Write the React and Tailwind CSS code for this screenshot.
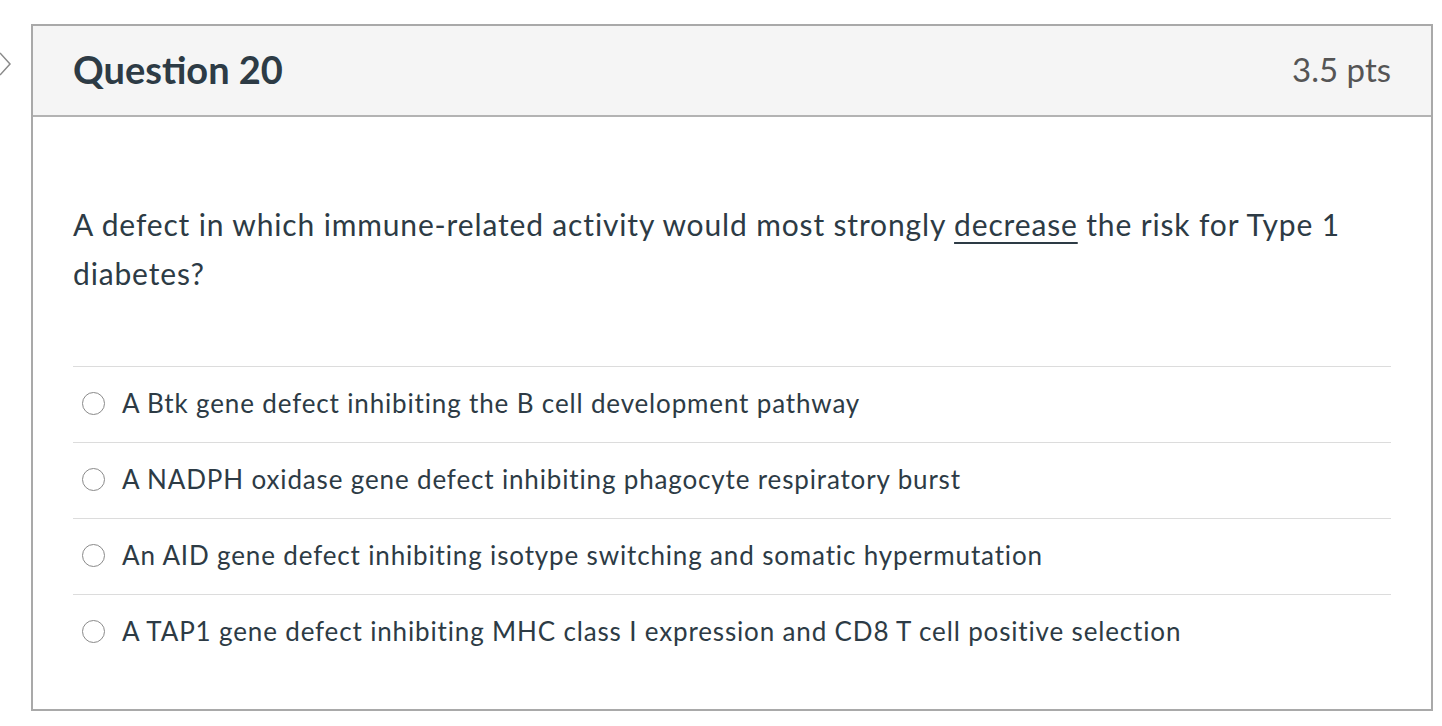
import React from "react";

const options = [
  "A Btk gene defect inhibiting the B cell development pathway",
  "A NADPH oxidase gene defect inhibiting phagocyte respiratory burst",
  "An AID gene defect inhibiting isotype switching and somatic hypermutation",
  "A TAP1 gene defect inhibiting MHC class I expression and CD8 T cell positive selection",
];

const App = () => {
  return (
    <div className="w-[1442px] h-[726px] bg-white overflow-hidden font-['Lato','Open_Sans',sans-serif] text-[#2d3b45]">
      <div className="flex pt-[24px]">
        {/* collapse arrow */}
        <div className="w-[31px] shrink-0 pt-[27px]">
          <svg width="14" height="26" viewBox="0 0 14 26" className="-ml-[2px]">
            <polyline points="2,2 12,13 2,24" fill="none" stroke="#8a8a8a" strokeWidth="1.5" />
          </svg>
        </div>

        <div className="w-[1402px] h-[687px] border-2 border-[#a9a9a9] flex flex-col">
          {/* header */}
          <div className="h-[91px] shrink-0 bg-[#f5f5f5] border-b-2 border-[#b3b3b3] flex items-center justify-between pl-[40px] pr-[40px]">
            <h2 className="text-[38px] font-bold text-[#2d3b45] leading-none pb-[4px]">
              Question 20
            </h2>
            <span className="text-[33px] text-[#555] leading-none pb-[2px]">3.5 pts</span>
          </div>

          {/* body */}
          <div className="px-[40px] pt-[83px]">
            <p className="text-[30px] tracking-[0.85px] leading-[49px] text-[#2d3b45]">
              A defect in which immune-related activity would most strongly{" "}
              <u className="underline-offset-[6px] decoration-[1.5px]">decrease</u> the risk for Type 1
              diabetes?
            </p>

            <div className="mt-[68px]">
              {options.map((o) => (
                <div
                  key={o}
                  className="h-[76px] border-t-[1.5px] border-[#dcdcdc] flex items-center pl-[9px] pb-[3px]"
                >
                  <span className="w-[23px] h-[23px] rounded-full border-[1.5px] border-[#8a8a8a] bg-white shrink-0" />
                  <span className="ml-[17px] text-[26px] tracking-[0.85px] text-[#2d3b45] leading-none">{o}</span>
                </div>
              ))}
            </div>
          </div>
        </div>
      </div>
    </div>
  );
};

export default App;
